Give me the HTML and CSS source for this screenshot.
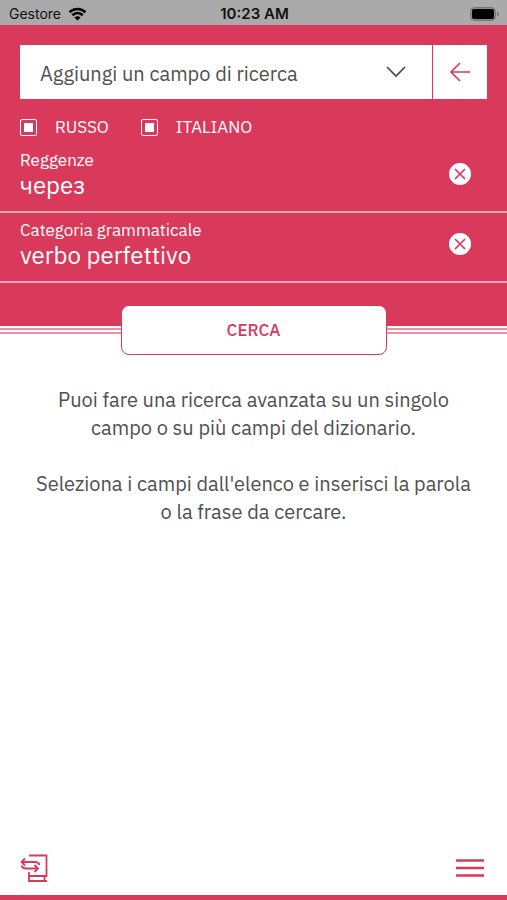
FILE: index.html
```html
<!DOCTYPE html>
<html lang="it">
	<head>
		<meta charset="UTF-8">
		<meta name="viewport" content="width=device-width, initial-scale=1">
		<title>Ricerca avanzata</title>
		<link rel="stylesheet" href="styles.css">
	</head>
	<body>
		<div class="status">
			<div class="carrier">
				<span>Gestore</span>
				<svg width="19" height="14" viewBox="0 0 19 14">
					<path d="M1.5 5.2C6 .9 13 .9 17.500 5.200M4.300 8.200c3-2.900 7.400-2.900 10.400 0" fill="none" stroke="#000" stroke-width="2.600"/>
					<path d="M9.500 13.500L6.400 10.400c1.700-1.600 4.500-1.600 6.200 0z"/>
				</svg>
			</div>
			<span class="time">10:23 AM</span>
			<div class="battery">
				<svg width="30" height="14" viewBox="0 0 30 14">
					<rect x=".5" y=".5" width="25" height="13" rx="4" fill="#8c8c8c" stroke="#777"/>
					<rect x="2" y="2" width="22" height="10" rx="2"/>
					<path d="M27 4.500v5c2.600-1 2.600-4 0-5z" fill="#777"/>
				</svg>
			</div>
		</div>
		<form class="search">
			<div class="bar">
				<div class="picker">
					<select class="field" aria-label="Campo di ricerca">
						<option>Aggiungi un campo di ricerca</option>
						<option>Reggenze</option>
						<option>Categoria grammaticale</option>
					</select>
					<svg class="chevron" width="20" height="12" viewBox="0 0 20 12" fill="none" stroke="#444" stroke-width="1.600">
						<path d="M1 1l9 9 9-9"/>
					</svg>
				</div>
				<button class="back" type="button" aria-label="Indietro">
					<svg width="20" height="20" viewBox="0 0 20 20" fill="none" stroke="#d9395b" stroke-width="1.600">
						<path d="M20 10H1M10 1l-9 9 9 9"/>
					</svg>
				</button>
			</div>
			<div class="langs">
				<label class="lang"><input class="check" type="checkbox" checked>RUSSO</label>
				<label class="lang"><input class="check" type="checkbox" checked>ITALIANO</label>
			</div>
			<div class="row">
				<div class="entry">
					<label class="name" for="reggenze">Reggenze</label>
					<input class="value" id="reggenze" type="text" value="через">
				</div>
				<button class="clear" type="button" aria-label="Cancella reggenze">
					<svg width="12" height="12" viewBox="0 0 12 12" fill="none" stroke="#d9395b" stroke-width="1.700">
						<path d="M1 1l10 10M11 1L1 11"/>
					</svg>
				</button>
			</div>
			<div class="row">
				<div class="entry">
					<label class="name" for="categoria">Categoria grammaticale</label>
					<input class="value" id="categoria" type="text" value="verbo perfettivo">
				</div>
				<button class="clear" type="button" aria-label="Cancella categoria">
					<svg width="12" height="12" viewBox="0 0 12 12" fill="none" stroke="#d9395b" stroke-width="1.700">
						<path d="M1 1l10 10M11 1L1 11"/>
					</svg>
				</button>
			</div>
		</form>
		<div class="edge">
			<button class="submit" type="button">CERCA</button>
		</div>
		<main class="help">
			<p>Puoi fare una ricerca avanzata su un singolo campo o su più campi del dizionario.</p>
			<p>Seleziona i campi dall'elenco e inserisci la parola o la frase da cercare.</p>
		</main>
		<footer class="tools">
			<button class="tool" type="button" aria-label="Cambia dizionario">
				<svg width="28" height="28" viewBox="0 0 28 28" fill="none" stroke="#d9395b" stroke-width="1.800">
					<path d="M9 1.500h17.500V22H9M9 18v9h18M24.500 22v5"/>
					<path d="M5 4.500L1.500 8 5 11.500M1.500 8H15c3 0 4 1 4.500 3"/>
					<path d="M14.500 11l3.500 3.500-3.500 3.500M18 14.500H6c-3 0-4-1-4.500-3"/>
				</svg>
			</button>
			<button class="tool" type="button" aria-label="Menu">
				<svg width="28" height="28" viewBox="0 0 28 28" fill="none" stroke="#d9395b" stroke-width="2.400">
					<path d="M0 6.500h28M0 14h28M0 21.500h28"/>
				</svg>
			</button>
		</footer>
	</body>
</html>
```
FILE: styles.css
```css
*{
	box-sizing: border-box;
}
body{
	margin: 0;
	min-height: 100vh;
	display: flex;
	flex-direction: column;
	background: #fff;
	border-bottom: solid 5px #d9395b;
	color: #505050;
	font-family: "IBM Plex Sans", "Noto Sans", sans-serif;
}
button, input, select{
	margin: 0;
	padding: 0;
	border: none;
	font-family: inherit;
}
button{
	display: flex;
	align-items: center;
	justify-content: center;
}
svg{
	display: block;
}
.status{
	display: grid;
	grid-template-columns: 1fr auto 1fr;
	align-items: center;
	height: 25px;
	padding: 2px 7px 0 9px;
	background: #aaa;
	color: #111;
	font: 14px Inter, sans-serif;
}
.carrier{
	display: flex;
	align-items: center;
	gap: 7px;
}
.time{
	font-size: 15px;
	font-weight: 600;
}
.battery{
	justify-self: end;
}
.search{
	padding: 20px 0 43px;
	background: #d9395b;
	color: #fff;
}
.bar{
	display: flex;
	gap: 1px;
	height: 54px;
	margin: 0 20px;
}
.picker{
	flex: 1;
	position: relative;
}
.field{
	width: 100%;
	height: 100%;
	padding: 2px 60px 0 20px;
	appearance: none;
	border-radius: 0;
	background: #fff;
	color: #505050;
	font-size: 20px;
}
.chevron{
	position: absolute;
	right: 26px;
	top: 21px;
	pointer-events: none;
}
.back{
	width: 54px;
	background: #fff;
}
.langs{
	display: flex;
	gap: 32px;
	padding: 16px 20px 4px;
}
.lang{
	display: flex;
	align-items: center;
	gap: 18px;
	font-size: 17px;
	line-height: 24px;
}
.check{
	width: 17px;
	height: 17px;
	appearance: none;
	border: solid 1px #fff;
	border-radius: 2px;
	background: #fff content-box;
	padding: 3px;
}
.row{
	display: flex;
	align-items: center;
	justify-content: space-between;
	height: 70px;
	padding: 0 36px 6px 20px;
	border-bottom: solid 2px #f2a9b9;
}
.entry{
	flex: 1;
	display: flex;
	flex-direction: column;
}
.name{
	font-size: 17px;
	line-height: 22px;
}
.value{
	width: 100%;
	height: 28px;
	background: none;
	color: #fff;
	font-size: 24px;
}
.clear{
	width: 22px;
	height: 22px;
	border-radius: 50%;
	background: #fff;
}
/* double line under the header, button sits over it */
.edge{
	display: flex;
	justify-content: center;
	height: 8px;
	border-top: solid 2px #fff;
	border-bottom: solid 2px #eb8fa3;
	background: linear-gradient(#eb8fa3 2px, #fff 2px);
}
.submit{
	position: relative;
	top: -23px;
	width: 266px;
	height: 50px;
	flex-shrink: 0;
	border: solid 1px #d9395b;
	border-radius: 8px;
	background: #fff;
	color: #d9395b;
	font-size: 17px;
	font-weight: 500;
}
.help{
	flex: 1;
	padding: 52px 30px 0;
	font-size: 20px;
	line-height: 28px;
	text-align: center;
}
.help p{
	margin: 0 0 28px;
}
.tools{
	display: flex;
	justify-content: space-between;
	padding: 0 23px 13px 20px;
}
.tool{
	background: none;
}
```
